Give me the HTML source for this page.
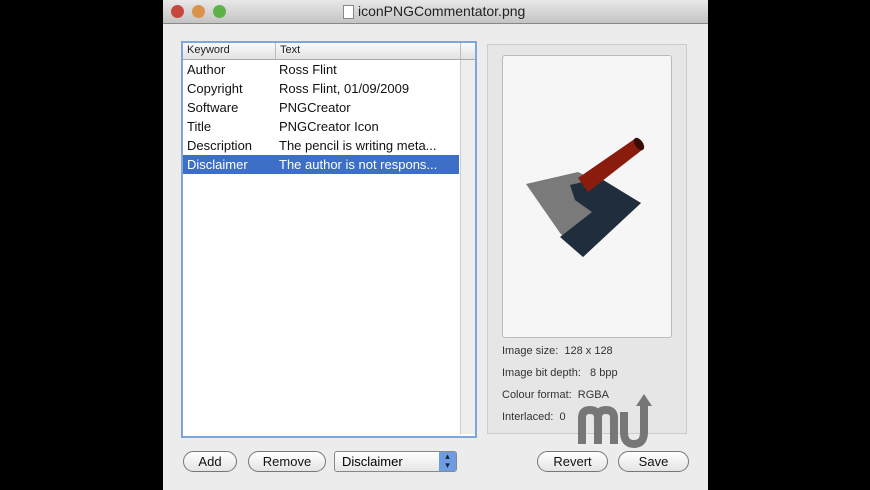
<!DOCTYPE html><html><head><style>
body{margin:0;width:870px;height:490px;background:#000;position:relative;overflow:hidden;font-family:"Liberation Sans",sans-serif}
.a{position:absolute}
.win{left:163px;top:0;width:545px;height:490px;background:#ececec}
.tb{left:163px;top:0;width:545px;height:23px;background:linear-gradient(#e8e8e8,#c4c4c4);border-bottom:1px solid #888}
.dot{width:13px;height:13px;border-radius:50%;top:5px}
.row{position:absolute;left:2px;width:276px;height:19px;font-size:13px;color:#111;line-height:19px}
.row span{position:absolute}
.btn{border:1px solid #777;border-radius:11px;background:linear-gradient(#fff,#e4e4e4);font-size:13px;text-align:center;line-height:19px;height:19px;color:#111}
.info{font-size:11px;color:#333;left:502px}
</style></head><body>
<div class="a win"></div>
<div class="a tb"></div>
<div class="a dot" style="left:171px;background:#c8473c"></div>
<div class="a dot" style="left:192px;background:#d9934a"></div>
<div class="a dot" style="left:213px;background:#5fb248"></div>
<div class="a" style="left:343px;top:5px;width:9px;height:12px;background:#fff;border:1px solid #888"></div>
<div class="a" style="left:358px;top:3px;font-size:14px;color:#222">iconPNGCommentator.png</div>
<div class="a" style="left:181px;top:41px;width:292px;height:393px;border:2px solid #7ea6d8;background:#fff"></div>
<div class="a" style="left:183px;top:43px;width:292px;height:16px;background:linear-gradient(#fafafa,#e2e2e2);border-bottom:1px solid #aaa;font-size:11px;color:#222"><span class="a" style="left:4px;top:1px">Keyword</span><span class="a" style="left:92px;top:0;width:1px;height:16px;background:#bbb"></span><span class="a" style="left:97px;top:1px">Text</span><span class="a" style="left:277px;top:0;width:1px;height:16px;background:#bbb"></span></div>
<div class="a" style="left:460px;top:60px;width:14px;height:374px;background:#eee;border-left:1px solid #ccc"></div>
<div class="a" style="left:181px;top:60px">
<div class="row" style="top:0"><span style="left:4px">Author</span><span style="left:96px">Ross Flint</span></div>
<div class="row" style="top:19px"><span style="left:4px">Copyright</span><span style="left:96px">Ross Flint, 01/09/2009</span></div>
<div class="row" style="top:38px"><span style="left:4px">Software</span><span style="left:96px">PNGCreator</span></div>
<div class="row" style="top:57px"><span style="left:4px">Title</span><span style="left:96px">PNGCreator Icon</span></div>
<div class="row" style="top:76px"><span style="left:4px">Description</span><span style="left:96px">The pencil is writing meta...</span></div>
<div class="row" style="top:95px;background:#3d6fc6;color:#fff"><span style="left:4px">Disclaimer</span><span style="left:96px">The author is not respons...</span></div>
</div>
<div class="a" style="left:487px;top:44px;width:198px;height:388px;border:1px solid #ccc;background:#e6e6e6"></div>
<div class="a" style="left:502px;top:55px;width:168px;height:281px;border:1px solid #bbb;border-radius:3px;background:#f6f6f6"></div>
<svg class="a" style="left:0;top:0" width="870" height="490">
<polygon points="526,184 578,172 641,203 583,257 560,233" fill="#7a7a7a"/>
<polygon points="570,185 600,178 641,203 583,257 560,237 592,212 575,200" fill="#1f2d3c"/>
<polygon points="578,178 636,138 642,150 588,192" fill="#8a1c0e"/>
<ellipse cx="639" cy="144" rx="4" ry="7" fill="#3a0a05" transform="rotate(-35 639 144)"/>
</svg>
<div class="a info" style="top:345px">Image size:&nbsp; 128 x 128</div>
<div class="a info" style="top:367px">Image bit depth:&nbsp;&nbsp; 8 bpp</div>
<div class="a info" style="top:389px">Colour format:&nbsp; RGBA</div>
<div class="a info" style="top:411px">Interlaced:&nbsp; 0</div>
<svg class="a" style="left:576px;top:392px" width="90" height="56">
<path d="M6,52 V26 Q6,18 14,18 Q22,18 22,26 V52 M22,26 Q22,18 30,18 Q38,18 38,26 V52 M48,20 V40 Q48,52 58,52 Q68,52 68,40 V12" fill="none" stroke="#777" stroke-width="8"/>
<polygon points="60,14 76,14 68,2" fill="#777"/>
</svg>
<div class="a btn" style="left:183px;top:451px;width:52px">Add</div>
<div class="a btn" style="left:248px;top:451px;width:76px">Remove</div>
<div class="a" style="left:334px;top:451px;width:121px;height:19px;border:1px solid #888;border-radius:3px;background:linear-gradient(#fff,#e6e6e6);font-size:13px;line-height:19px"><span style="margin-left:7px">Disclaimer</span><span class="a" style="right:0;top:0;width:17px;height:19px;background:#6d9ce0;color:#123;font-size:9px;text-align:center;line-height:9px">▴<br>▾</span></div>
<div class="a btn" style="left:537px;top:451px;width:69px">Revert</div>
<div class="a btn" style="left:618px;top:451px;width:69px">Save</div>
</body></html>
